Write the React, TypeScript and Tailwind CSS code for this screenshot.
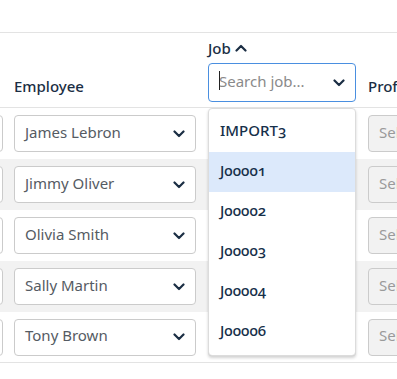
import { useState } from "react";

const employees = ['James Lebron', 'Jimmy Oliver', 'Olivia Smith', 'Sally Martin', 'Tony Brown']
const jobs = ['IMPORT3', 'J00001', 'J00002', 'J00003', 'J00004', 'J00006']

function Chevron({ up = false }: { up?: boolean }) {
    return (
        <svg width="12" height="8" viewBox="0 0 12 8" className={up ? 'rotate-180' : ''}>
            <path d="M1.5 1.5 L6 6 L10.5 1.5" fill="none" stroke="#1b2e44" strokeWidth="2.2" strokeLinecap="round" strokeLinejoin="round" />
        </svg>
    )
}

function Select({ value, placeholder, disabled }: { value?: string, placeholder?: string, disabled?: boolean }) {
    return (
        <div className={`h-[37px] w-full flex items-center justify-between pl-[10px] pr-[10px] rounded-[4px] border border-[#cbcbcb] ${disabled ? 'bg-[#f2f2f2]' : 'bg-white'}`}>
            <span className={`text-[15px] whitespace-nowrap -mt-[3px] ${value ? 'text-[#555b63]' : 'text-[#9a9a9a]'}`}>{value || placeholder}</span>
            {!disabled && <Chevron />}
        </div>
    )
}

export default function App() {
    const [active] = useState('J00001')

    return (
        <div className="w-[397px] h-[379px] bg-white overflow-hidden font-['Noto_Sans',sans-serif] oldstyle-nums">
            <div className="h-[32px]" />
            <div className="border-t border-b border-[#e3e3e3] h-[76px] flex items-end">
                <div className="w-[8px] shrink-0" />
                <div className="w-[194px] shrink-0 px-[6px] pb-[9px]">
                    <span className="text-[15px] leading-[20px] font-medium text-[#1b2e44]">Employee</span>
                </div>
                <div className="w-[160px] shrink-0 px-[6px] pb-[5px] relative z-10">
                    <div className="flex items-center gap-[4px] text-[15px] leading-[20px] font-medium text-[#1b2e44] mb-[5px]">
                        Job <Chevron up />
                    </div>
                    <div className="relative">
                        <div className="h-[39px] rounded-[4px] border-[1.5px] border-[#4a8fe0] bg-white flex items-center justify-between pl-[10px] pr-[10px]">
                            <span className="text-[15px] text-[#8a8a8a] -mt-[3px] relative">
                                <span className="absolute left-0 top-[1px] h-[19px] w-px bg-[#222]" />
                                Search job...
                            </span>
                            <Chevron />
                        </div>
                        <div className="absolute left-0 right-0 top-[45px] bg-white rounded-[4px] border border-[#dcdcdc] shadow-[0_2px_3px_rgba(0,0,0,0.18)] py-[3px]">
                            {jobs.map((job) => (
                                <div key={job} className={`h-[40px] flex items-center px-[11px] text-[15px] font-medium text-[#16304a] ${job === active ? 'bg-[#dce9fb]' : ''}`}>
                                    <span className="-mt-[3px]">{job}</span>
                                </div>
                            ))}
                        </div>
                    </div>
                </div>
                <div className="shrink-0 px-[6px] pb-[9px]">
                    <span className="text-[15px] leading-[20px] font-medium text-[#1b2e44] whitespace-nowrap">Profession</span>
                </div>
            </div>
            {employees.map((name, i) => (
                <div key={name} className={`h-[51px] flex items-center ${i % 2 === 1 ? 'bg-[#f2f2f2]' : 'bg-white'} ${i === employees.length - 1 ? 'border-b border-[#e3e3e3]' : ''}`}>
                    <div className="w-[8px] shrink-0 overflow-hidden flex justify-end">
                        <div className="w-[40px] shrink-0 pr-[5px]">
                            <div className="h-[37px] rounded-[4px] border border-[#cbcbcb] bg-white" />
                        </div>
                    </div>
                    <div className="w-[194px] shrink-0 px-[6px]">
                        <Select value={name} />
                    </div>
                    <div className="w-[160px] shrink-0 px-[6px]">
                        <Select />
                    </div>
                    <div className="w-[150px] shrink-0 px-[6px]">
                        <Select placeholder="Select profession" disabled />
                    </div>
                </div>
            ))}
        </div>
    )
}
